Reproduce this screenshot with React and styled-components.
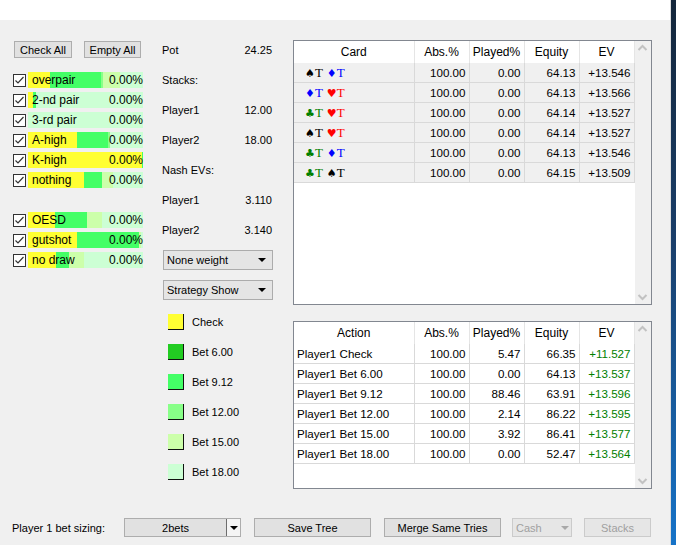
import React from "react";
import styled, { createGlobalStyle } from "styled-components";

const GlobalStyle = createGlobalStyle`
  body {
    margin: 0;
    background: #f0f0f0;
    font-family: "Liberation Sans", Arial, sans-serif;
    font-size: 11px;
    color: #000;
  }
`;

const C = {
  check: "#ffff33",
  b6: "#22cc22",
  b9: "#44ff66",
  b12: "#88ff88",
  b15: "#ccffaa",
  b18: "#ccffd4",
};

const Screen = styled.div`
  display: flex;
  width: 676px;
  height: 545px;
  overflow: hidden;
`;

const Edge = styled.div`
  width: 5px;
  background: linear-gradient(#14263a 0%, #1a3f6b 45%, #1673c8 100%);
  border-left: 1px solid #dcdcdc;
`;

const Main = styled.div`
  flex: 1;
  display: flex;
  flex-direction: column;
  background: #f0f0f0;
`;

const TitleBand = styled.div`
  height: 20px;
  background: #fff;
`;

const Body = styled.div`
  flex: 1;
  display: flex;
  padding: 15px 0 0 12px;
`;

/* ---------- left column ---------- */

const LeftCol = styled.div`
  width: 131px;
  padding-top: 6px;
  display: flex;
  flex-direction: column;
`;

const ButtonRow = styled.div`
  display: flex;
  gap: 12px;
  margin-left: 2px;
  margin-bottom: 12px;
`;

const Button = styled.button`
  width: ${(p) => p.$w}px;
  height: ${(p) => p.$h || 17}px;
  margin-left: ${(p) => p.$ml || 0}px;
  padding: 0;
  font-family: inherit;
  font-size: 11px;
  color: ${(p) => (p.disabled ? "#a0a0a0" : "#000")};
  background: ${(p) => (p.disabled ? "#e6e6e6" : "#e1e1e1")};
  border: 1px solid ${(p) => (p.disabled ? "#cbcbcb" : "#adadad")};
  border-radius: 0;
`;

const CheckRow = styled.div`
  height: 20px;
  display: flex;
  align-items: center;
  gap: 2px;
  padding-left: 1px;
`;

const Spacer = styled.div`
  height: ${(p) => p.$h}px;
`;

const Box = styled.div`
  width: 13px;
  height: 13px;
  box-sizing: border-box;
  border: 1px solid #333;
  background: #fff;
  display: flex;
  align-items: center;
  justify-content: center;
`;

const Bar = styled.div`
  position: relative;
  width: 115px;
  height: 16px;
  display: flex;
  background: ${C.b18};
`;

const Seg = styled.div`
  width: ${(p) => p.$w}px;
  flex: ${(p) => (p.$rest ? 1 : "none")};
  background: ${(p) => p.$c};
`;

const BarText = styled.div`
  position: absolute;
  inset: 0;
  display: flex;
  align-items: center;
  justify-content: space-between;
  padding: 0 0 0 4px;
  font-size: 12px;
  line-height: 16px;
`;

/* ---------- middle column ---------- */

const MidCol = styled.div`
  width: 111px;
  margin-left: 19px;
  display: flex;
  flex-direction: column;
`;

const InfoRow = styled.div`
  height: 30px;
  display: flex;
  align-items: center;
  justify-content: space-between;
  padding-right: 1px;
`;

const Select = styled.div`
  height: 20px;
  box-sizing: border-box;
  margin: ${(p) => p.$mt}px 0 0 1px;
  width: 110px;
  border: 1px solid #acacac;
  background: #e5e5e5;
  display: flex;
  align-items: center;
  justify-content: space-between;
  padding: 0 6px 0 3px;
`;

const Caret = styled.span`
  width: 0;
  height: 0;
  border-left: 4px solid transparent;
  border-right: 4px solid transparent;
  border-top: 4px solid ${(p) => p.$c || "#000"};
`;

const Legend = styled.div`
  margin-top: 7px;
  display: flex;
  flex-direction: column;
`;

const LegendRow = styled.div`
  height: 30px;
  display: flex;
  align-items: center;
  padding-left: 6px;
  gap: 8px;
`;

const Swatch = styled.div`
  width: 16px;
  height: 16px;
  box-sizing: border-box;
  background: ${(p) => p.$c};
  border-right: 1px solid #111;
  border-bottom: 1px solid #111;
`;

/* ---------- right column ---------- */

const RightCol = styled.div`
  width: 359px;
  margin-left: 20px;
  padding-top: 5px;
  display: flex;
  flex-direction: column;
  gap: 16px;
`;

const Frame = styled.div`
  height: ${(p) => p.$h}px;
  box-sizing: border-box;
  border: 1px solid #828790;
  background: #fff;
  display: flex;
`;

const TableArea = styled.div`
  flex: 1;
`;

const Table = styled.table`
  border-collapse: collapse;
  table-layout: fixed;
  width: 340px;
`;

const Th = styled.th`
  height: 22px;
  padding: 0;
  font-weight: normal;
  font-size: 12px;
  text-align: center;
  border-right: 1px solid #e5e5e5;
  background: #fff;
`;

const Td = styled.td`
  height: 19px;
  padding: 0 ${(p) => (p.$left ? 0 : 3)}px 0 ${(p) => p.$pl || 0}px;
  font-size: 11.6px;
  text-align: ${(p) => (p.$left ? "left" : "right")};
  color: ${(p) => p.$color || "#000"};
  background: ${(p) => (p.$gray ? "#f0f0f0" : "#fff")};
  border-right: 1px solid #d9d9d9;
  border-bottom: 1px solid #d9d9d9;
  white-space: nowrap;
`;

const Scroll = styled.div`
  width: 17px;
  background: #f0f0f0;
  display: flex;
  flex-direction: column;
  justify-content: space-between;
  align-items: center;
  padding: 3px 0;
`;

const Card = styled.span`
  font-family: "Liberation Serif", "Times New Roman", serif;
  font-size: 13px;
  color: ${(p) => p.$c};
  margin-right: ${(p) => p.$mr || 0}px;
`;

const Suit = styled.span`
  font-family: "DejaVu Sans", sans-serif;
  font-size: 11px;
`;

/* ---------- bottom bar ---------- */

const BottomBar = styled.div`
  height: 19px;
  display: flex;
  align-items: center;
  padding: 0 0 8px 12px;
`;

const BarLabel = styled.div`
  width: 112px;
`;

const Combo = styled.div`
  height: 19px;
  box-sizing: border-box;
  border: 1px solid ${(p) => (p.$disabled ? "#cbcbcb" : "#adadad")};
  background: ${(p) => (p.$disabled ? "#e6e6e6" : "#e1e1e1")};
  color: ${(p) => (p.$disabled ? "#a0a0a0" : "#000")};
  margin-left: ${(p) => p.$ml || 0}px;
  display: flex;
  align-items: center;
  width: ${(p) => p.$w}px;
`;

const ComboText = styled.div`
  flex: 1;
  text-align: ${(p) => p.$align || "center"};
  padding-left: ${(p) => p.$pl || 0}px;
`;

const ComboArrow = styled.div`
  width: 13px;
  height: 100%;
  display: flex;
  align-items: center;
  justify-content: center;
  border-left: ${(p) => (p.$line ? "1px solid #6d6d6d" : "none")};
  background: ${(p) => (p.$line ? "#f4f4f4" : "transparent")};
`;

/* ---------- data ---------- */

const hands = [
  { name: "overpair", segs: [[C.check, 22], [C.b9, 51], [C.b12, 2], [C.b15, 17]] },
  { name: "2-nd pair", segs: [[C.check, 5], [C.b9, 3]] },
  { name: "3-rd pair", segs: [] },
  { name: "A-high", segs: [[C.check, 49], [C.b9, 31], [C.b12, 2]] },
  { name: "K-high", segs: [[C.check, 114], [C.b9, 1]] },
  { name: "nothing", segs: [[C.check, 56], [C.b9, 18], [C.b15, 11]] },
];

const draws = [
  { name: "OESD", segs: [[C.check, 27], [C.b9, 32], [C.b15, 15]] },
  { name: "gutshot", segs: [[C.check, 49], [C.b9, 62], [C.b15, 2]] },
  { name: "no draw", segs: [[C.check, 28], [C.b9, 13], [C.b15, 15]] },
];

const info = [
  ["Pot", "24.25"],
  ["Stacks:", ""],
  ["Player1", "12.00"],
  ["Player2", "18.00"],
  ["Nash EVs:", ""],
  ["Player1", "3.110"],
  ["Player2", "3.140"],
];

const legend = [
  ["Check", C.check],
  ["Bet 6.00", C.b6],
  ["Bet 9.12", C.b9],
  ["Bet 12.00", C.b12],
  ["Bet 15.00", C.b15],
  ["Bet 18.00", C.b18],
];

const SUITS = {
  s: ["♠", "#000"],
  d: ["♦", "#0000ff"],
  h: ["♥", "#ff0000"],
  c: ["♣", "#008000"],
};

const cardRows = [
  ["s", "d", "13.546", "64.13"],
  ["d", "h", "13.566", "64.13"],
  ["c", "h", "13.527", "64.14"],
  ["s", "h", "13.527", "64.14"],
  ["c", "d", "13.546", "64.13"],
  ["c", "s", "13.509", "64.15"],
];

const actionRows = [
  ["Player1 Check", "5.47", "66.35", "+11.527"],
  ["Player1 Bet 6.00", "0.00", "64.13", "+13.537"],
  ["Player1 Bet 9.12", "88.46", "63.91", "+13.596"],
  ["Player1 Bet 12.00", "2.14", "86.22", "+13.595"],
  ["Player1 Bet 15.00", "3.92", "86.41", "+13.577"],
  ["Player1 Bet 18.00", "0.00", "52.47", "+13.564"],
];

/* ---------- parts ---------- */

const Check = () => (
  <Box>
    <svg width="11" height="11" viewBox="0 0 11 11">
      <polyline points="1.5,5.5 4,8 9.5,2" fill="none" stroke="#333" strokeWidth="1.2" />
    </svg>
  </Box>
);

const HandRow = ({ name, segs }) => (
  <CheckRow>
    <Check />
    <Bar>
      {segs.map(([c, w], i) => (
        <Seg key={i} $c={c} $w={w} />
      ))}
      <Seg $c={C.b18} $rest />
      <BarText>
        <span>{name}</span>
        <span>0.00%</span>
      </BarText>
    </Bar>
  </CheckRow>
);

const Chevron = ({ up }) => (
  <svg width="11" height="8" viewBox="0 0 11 8">
    <polyline
      points={up ? "1.5,6 5.5,2 9.5,6" : "1.5,2 5.5,6 9.5,2"}
      fill="none"
      stroke="#c2c2c2"
      strokeWidth="2"
    />
  </svg>
);

const Cards = ({ a, b }) => (
  <>
    <Card $c={SUITS[a][1]} $mr={4}>
      <Suit>{SUITS[a][0]}</Suit>T
    </Card>
    <Card $c={SUITS[b][1]}>
      <Suit>{SUITS[b][0]}</Suit>T
    </Card>
  </>
);

const Cols = () => (
  <colgroup>
    <col style={{ width: 120 }} />
    <col style={{ width: 55 }} />
    <col style={{ width: 55 }} />
    <col style={{ width: 55 }} />
    <col style={{ width: 55 }} />
  </colgroup>
);

const App = () => (
  <Screen>
    <GlobalStyle />
    <Main>
      <TitleBand />
      <Body>
        <LeftCol>
          <ButtonRow>
            <Button $w={58}>Check All</Button>
            <Button $w={57}>Empty All</Button>
          </ButtonRow>
          {hands.map((h) => (
            <HandRow key={h.name} {...h} />
          ))}
          <Spacer $h={20} />
          {draws.map((h) => (
            <HandRow key={h.name} {...h} />
          ))}
        </LeftCol>

        <MidCol>
          {info.map(([k, v], i) => (
            <InfoRow key={i}>
              <span>{k}</span>
              <span>{v}</span>
            </InfoRow>
          ))}
          <Select $mt={5}>
            <span>None weight</span>
            <Caret />
          </Select>
          <Select $mt={10}>
            <span>Strategy Show</span>
            <Caret />
          </Select>
          <Legend>
            {legend.map(([t, c]) => (
              <LegendRow key={t}>
                <Swatch $c={c} />
                <span>{t}</span>
              </LegendRow>
            ))}
          </Legend>
        </MidCol>

        <RightCol>
          <Frame $h={265}>
            <TableArea>
              <Table>
                <Cols />
                <thead>
                  <tr>
                    <Th>Card</Th>
                    <Th>Abs.%</Th>
                    <Th>Played%</Th>
                    <Th>Equity</Th>
                    <Th>EV</Th>
                  </tr>
                </thead>
                <tbody>
                  {cardRows.map(([a, b, ev, eq], i) => (
                    <tr key={i}>
                      <Td $left $gray $pl={11}>
                        <Cards a={a} b={b} />
                      </Td>
                      <Td $gray>100.00</Td>
                      <Td $gray>0.00</Td>
                      <Td $gray>{eq}</Td>
                      <Td $gray>+{ev}</Td>
                    </tr>
                  ))}
                </tbody>
              </Table>
            </TableArea>
            <Scroll>
              <Chevron up />
              <Chevron />
            </Scroll>
          </Frame>

          <Frame $h={168}>
            <TableArea>
              <Table>
                <Cols />
                <thead>
                  <tr>
                    <Th>Action</Th>
                    <Th>Abs.%</Th>
                    <Th>Played%</Th>
                    <Th>Equity</Th>
                    <Th>EV</Th>
                  </tr>
                </thead>
                <tbody>
                  {actionRows.map(([a, p, eq, ev]) => (
                    <tr key={a}>
                      <Td $left $pl={3}>
                        {a}
                      </Td>
                      <Td>100.00</Td>
                      <Td>{p}</Td>
                      <Td>{eq}</Td>
                      <Td $color="#008000">{ev}</Td>
                    </tr>
                  ))}
                </tbody>
              </Table>
            </TableArea>
            <Scroll>
              <Chevron up />
              <Chevron />
            </Scroll>
          </Frame>
        </RightCol>
      </Body>

      <BottomBar>
        <BarLabel>Player 1 bet sizing:</BarLabel>
        <Combo $w={117}>
          <ComboText>2bets</ComboText>
          <ComboArrow $line>
            <Caret />
          </ComboArrow>
        </Combo>
        <Button $w={117} $h={19} $ml={13}>
          Save Tree
        </Button>
        <Button $w={117} $h={19} $ml={13}>
          Merge Same Tries
        </Button>
        <Combo $w={60} $ml={11} $disabled>
          <ComboText $align="left" $pl={3}>
            Cash
          </ComboText>
          <ComboArrow>
            <Caret $c="#a8a8a8" />
          </ComboArrow>
        </Combo>
        <Button $w={67} $h={19} $ml={12} disabled>
          Stacks
        </Button>
      </BottomBar>
    </Main>
    <Edge />
  </Screen>
);

export default App;
